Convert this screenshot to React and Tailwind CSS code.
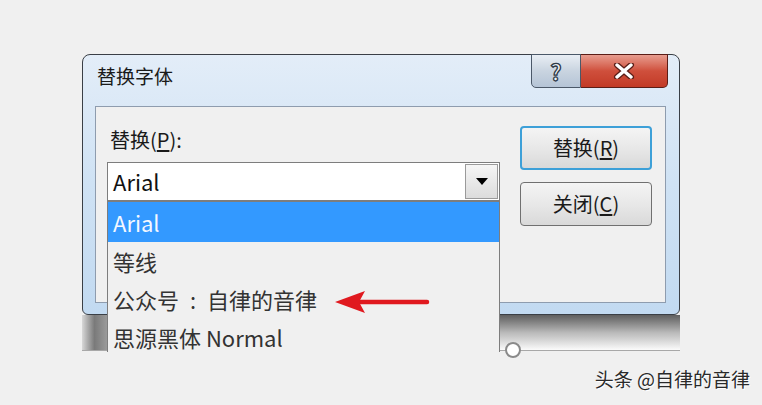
const items = [
  { label: 'Arial', selected: true },
  { label: '等线' },
  { label: '公众号\u2002:\u2002自律的音律' },
  { label: '思源黑体 Normal' },
]

const font = 'font-["Noto_Sans_CJK_SC","Noto_Sans",sans-serif]'

function CloseIcon() {
  return (
    <svg width="22" height="16" viewBox="0 0 22 16">
      <path d="M4 2 L18 14 M18 2 L4 14" stroke="#5a1e17" strokeWidth="6" strokeLinecap="round" />
      <path d="M4 2 L18 14 M18 2 L4 14" stroke="#ffffff" strokeWidth="3.4" strokeLinecap="round" />
    </svg>
  )
}

function Arrow() {
  return (
    <svg width="96" height="26" viewBox="0 0 96 26">
      <path d="M22 13 L92 13" stroke="#e0191f" strokeWidth="4.5" strokeLinecap="round" />
      <path d="M0 13 L30 2 L24 13 L30 24 Z" fill="#e0191f" />
    </svg>
  )
}

export default function App() {
  return (
    <div className={`w-[762px] h-[405px] bg-[#f0f0f0] pt-[54px] relative overflow-hidden ${font}`}>
      <div className="ml-[82px] w-[598px] h-[298px] relative">
        {/* window */}
        <div className="w-[598px] h-[261px] border border-[#3a3f46] rounded-t-[8px] rounded-b-[6px] bg-gradient-to-b from-[#e3edf8] via-[#cfe2f4] to-[#c2daf1] flex flex-col">
          <div className="h-[51px] flex justify-between pl-[14px] pr-[11px]">
            <div className="pt-[7px] text-[19px] text-[#1a1a1a] leading-[28px]">替换字体</div>
            <div className="flex -mt-[1px] h-[34px]">
              <div className="w-[50px] h-full border border-[#4b5868] rounded-bl-[5px] bg-gradient-to-b from-[#e9eef4] via-[#c9d4e0] to-[#b5c4d6] flex items-center justify-center">
                <span className="text-[22px] font-bold leading-none text-[#eef2f6] [-webkit-text-stroke:1.3px_#2f3a48]">?</span>
              </div>
              <div className="w-[87px] h-full border border-l-0 border-[#5b1d16] rounded-br-[5px] bg-gradient-to-b from-[#e79c8f] via-[#cf4f3c] to-[#c23a26] flex items-center justify-center">
                <CloseIcon />
              </div>
            </div>
          </div>
          <div className="ml-[12px] mr-[13px] h-[197px] border border-[#8e9cae] bg-[#f0f0f0] flex pl-[11px] pt-[19px] gap-[20px]">
            <div className="w-[393px]">
              <div className="ml-[3px] text-[20px] leading-[26px] text-[#1a1a1a] mt-[1px]">
                替换(<span className="underline underline-offset-2">P</span>):
              </div>
              <div className="mt-[9px] h-[39px] border border-[#7d7d7d] bg-white p-[1px] flex">
                <div className="flex-1 flex items-center pl-[4px] text-[22px] text-[#111]">Arial</div>
                <div className="w-[33px] border border-[#9a9a9a] bg-gradient-to-b from-[#f6f6f6] to-[#dcdcdc] flex items-center justify-center">
                  <svg width="12" height="8" viewBox="0 0 12 8">
                    <path d="M0 0 L12 0 L6 7 Z" fill="#000" />
                  </svg>
                </div>
              </div>
            </div>
            <div className="flex flex-col gap-[12px]">
              <button className="w-[132px] h-[44px] rounded-[4px] border-2 border-[#3da0d8] bg-gradient-to-b from-[#f4f4f4] via-[#e8e8e8] to-[#d9d9d9] text-[20px] text-[#1a1a1a]">
                替换(<span className="underline underline-offset-2">R</span>)
              </button>
              <button className="w-[132px] h-[44px] rounded-[4px] border border-[#707070] bg-gradient-to-b from-[#f4f4f4] via-[#e8e8e8] to-[#d9d9d9] text-[20px] text-[#1a1a1a]">
                关闭(<span className="underline underline-offset-2">C</span>)
              </button>
            </div>
          </div>
        </div>
        {/* window underneath */}
        <div className="relative h-[36px] flex border-b border-[#a8a8a8]">
          <div className="w-[25px] h-full bg-gradient-to-r from-[#d8d8d8] via-[#7a7a7a] to-[#9a9a9a]" />
          <div className="flex-1 h-full bg-gradient-to-b from-[#5f5f5f] via-[#b9b9b9] to-[#fbfbfb]" />
          <div className="absolute left-[423px] bottom-[-8px] w-[16px] h-[16px] rounded-full border-2 border-[#8a8a8a] bg-white" />
        </div>
        {/* dropdown list */}
        <div className="absolute left-[25px] top-[147px] w-[393px] h-[151px] border-x border-t border-[#7d7d7d] bg-[#f0f0f0] overflow-hidden">
          {items.map((item) => (
            <div
              key={item.label}
              className={`h-[38px] flex items-center pl-[5px] text-[22px] whitespace-pre ${
                item.selected ? 'bg-[#3399ff] text-[#f4f8ff] h-[40px]' : 'text-[#333]'
              }`}
            >
              {item.label}
            </div>
          ))}
        </div>
        <div className="absolute left-[253px] top-[235px]">
          <Arrow />
        </div>
      </div>
      <div className="flex justify-end pr-[12px] mt-[17px]">
        <span className="text-[19px] leading-[20px] text-[#2a2a2a] [text-shadow:1px_1px_0_#ffffff]">头条 @自律的音律</span>
      </div>
    </div>
  )
}
